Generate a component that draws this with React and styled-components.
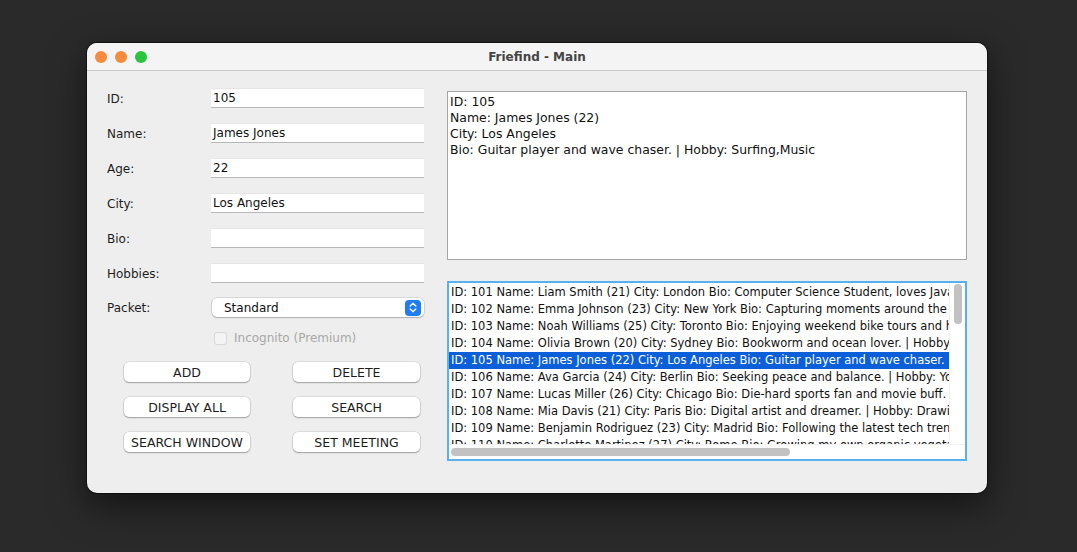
import React from 'react';
import styled, { createGlobalStyle } from 'styled-components';

const GlobalStyle = createGlobalStyle`
	html, body {
		margin: 0;
		padding: 0;
		background: #2a2a2a;
		width: 1077px;
		height: 552px;
		overflow: hidden;
	}
	body {
		font-family: "DejaVu Sans", "Liberation Sans", sans-serif;
		font-size: 12px;
		color: #1d1d1d;
	}
`;

const Desktop = styled.div`
	padding: 43px 0 0 87px;
`;

const Window = styled.div`
	width: 900px;
	height: 450px;
	border-radius: 10px;
	overflow: hidden;
	background: #eeeeee;
	display: flex;
	flex-direction: column;
	box-shadow: 0 0 0 1px rgba(0, 0, 0, 0.45), 0 12px 36px rgba(0, 0, 0, 0.55);
`;

const TitleBar = styled.div`
	height: 27px;
	flex: none;
	background: #f4f4f4;
	border-bottom: 1px solid #c9c9c9;
	display: flex;
	align-items: center;
	position: relative;
	h1 {
		flex: 1;
		margin: 0;
		text-align: center;
		font-size: 12px;
		font-weight: bold;
		color: #444;
	}
`;

const Lights = styled.div`
	position: absolute;
	left: 8px;
	top: 8px;
	display: flex;
	gap: 8px;
`;

const Light = styled.span`
	width: 12px;
	height: 12px;
	border-radius: 50%;
	background: ${(p) => p.color};
`;

const Content = styled.div`
	flex: 1;
	display: flex;
	padding: 17px 20px 0 20px;
	gap: 23px;
`;

const Form = styled.div`
	width: 317px;
	display: flex;
	flex-direction: column;
`;

const FieldRow = styled.div`
	display: grid;
	grid-template-columns: 104px 213px;
	align-items: center;
	height: 19px;
	margin-bottom: 16px;
	label {
		color: #1d1d1d;
		padding-top: 1px;
	}
`;

const TextField = styled.div`
	height: 18px;
	background: #fff;
	border-top: 1px solid #e6e6e6;
	border-bottom: 1px solid #b8b8b8;
	padding: 0 2px;
	line-height: 18px;
	color: #111;
`;

const Combo = styled.div`
	height: 19px;
	margin-left: 1px;
	background: #fff;
	border-radius: 5px;
	box-shadow: 0 0 0 0.5px rgba(0, 0, 0, 0.18), 0 1px 1.5px rgba(0, 0, 0, 0.2);
	display: flex;
	align-items: center;
	justify-content: space-between;
	padding: 0 3px 0 12px;
	color: #111;
`;

const Stepper = styled.span`
	width: 16px;
	height: 16px;
	border-radius: 4px;
	background: #1f7cf3;
	display: flex;
	align-items: center;
	justify-content: center;
`;

const CheckRow = styled.div`
	display: flex;
	align-items: center;
	gap: 7px;
	margin: -2px 0 0 107px;
	height: 14px;
	color: #a8a8a8;
`;

const CheckBox = styled.span`
	width: 11px;
	height: 11px;
	border-radius: 3px;
	border: 1px solid #d8d8d8;
	background: #f4f4f4;
`;

const ButtonGrid = styled.div`
	display: grid;
	grid-template-columns: 126px 127px;
	column-gap: 43px;
	row-gap: 15px;
	margin: 17px 0 0 17px;
`;

const Button = styled.button`
	height: 20px;
	border: none;
	border-radius: 5px;
	background: #fff;
	box-shadow: 0 0 0 0.5px rgba(0, 0, 0, 0.15), 0 1px 1.5px rgba(0, 0, 0, 0.28);
	font-family: inherit;
	font-size: 12.5px;
	color: #1d1d1d;
	padding: 0;
	white-space: nowrap;
`;

const Right = styled.div`
	width: 520px;
	display: flex;
	flex-direction: column;
	padding-top: 3px;
	gap: 21px;
`;

const Details = styled.div`
	height: 163px;
	background: #fff;
	border: 1px solid #a4a4a4;
	padding: 2px 2px;
	font-size: 12.45px;
	line-height: 16px;
	color: #111;
	white-space: pre;
	overflow: hidden;
`;

const List = styled.div`
	height: 176px;
	border: 2px solid #55b2ef;
	background: #fff;
	display: flex;
	flex-direction: column;
`;

const ListBody = styled.div`
	flex: 1;
	display: flex;
	min-height: 0;
`;

const Rows = styled.div`
	flex: 1;
	overflow: hidden;
	padding-top: 1px;
`;

const Row = styled.div`
	height: 17px;
	line-height: 17px;
	padding-left: 2px;
	font-size: 11.5px;
	white-space: nowrap;
	color: ${(p) => (p.selected ? '#fff' : '#111')};
	background: ${(p) => (p.selected ? '#0b5fd8' : 'transparent')};
`;

const VTrack = styled.div`
	width: 15px;
	flex: none;
	display: flex;
	justify-content: center;
	padding-top: 1px;
	border-left: 1px solid #f2f2f2;
`;

const VThumb = styled.div`
	width: 8px;
	height: 40px;
	border-radius: 4px;
	background: #c2c2c2;
`;

const HTrack = styled.div`
	height: 14px;
	flex: none;
	display: flex;
	align-items: center;
	padding-left: 2px;
	border-top: 1px solid #f2f2f2;
`;

const HThumb = styled.div`
	width: 339px;
	height: 8px;
	border-radius: 4px;
	background: #c2c2c2;
`;

const people = [
	'ID: 101 Name: Liam Smith (21) City: London Bio: Computer Science Student, loves Java | Hobby: Coding,Gaming',
	'ID: 102 Name: Emma Johnson (23) City: New York Bio: Capturing moments around the world. | Hobby: Photography,Travel',
	'ID: 103 Name: Noah Williams (25) City: Toronto Bio: Enjoying weekend bike tours and hiking. | Hobby: Cycling,Hiking',
	'ID: 104 Name: Olivia Brown (20) City: Sydney Bio: Bookworm and ocean lover. | Hobby: Reading,Swimming',
	'ID: 105 Name: James Jones (22) City: Los Angeles Bio: Guitar player and wave chaser. | Hobby: Surfing,Music',
	'ID: 106 Name: Ava Garcia (24) City: Berlin Bio: Seeking peace and balance. | Hobby: Yoga,Meditation',
	'ID: 107 Name: Lucas Miller (26) City: Chicago Bio: Die-hard sports fan and movie buff. | Hobby: Sports,Movies',
	'ID: 108 Name: Mia Davis (21) City: Paris Bio: Digital artist and dreamer. | Hobby: Drawing,Painting',
	'ID: 109 Name: Benjamin Rodriguez (23) City: Madrid Bio: Following the latest tech trends. | Hobby: Technology',
	'ID: 110 Name: Charlotte Martinez (27) City: Rome Bio: Growing my own organic vegetables. | Hobby: Gardening',
];

const fields = [
	['ID:', '105'],
	['Name:', 'James Jones'],
	['Age:', '22'],
	['City:', 'Los Angeles'],
	['Bio:', ''],
	['Hobbies:', ''],
];

const buttons = ['ADD', 'DELETE', 'DISPLAY ALL', 'SEARCH', 'SEARCH WINDOW', 'SET MEETING'];

export default function App() {
	return (
		<Desktop>
			<GlobalStyle />
			<Window>
				<TitleBar>
					<Lights>
						<Light color="#f68b3e" />
						<Light color="#f68b3e" />
						<Light color="#2bc43f" />
					</Lights>
					<h1>Friefind - Main</h1>
				</TitleBar>
				<Content>
					<Form>
						{fields.map(([label, value]) => (
							<FieldRow key={label}>
								<label>{label}</label>
								<TextField>{value}</TextField>
							</FieldRow>
						))}
						<FieldRow>
							<label>Packet:</label>
							<Combo>
								<span>Standard</span>
								<Stepper>
									<svg width="8" height="11" viewBox="0 0 8 11" fill="none" stroke="#fff" strokeWidth="1.4" strokeLinecap="round" strokeLinejoin="round">
										<path d="M1.2 4 L4 1.3 L6.8 4" />
										<path d="M1.2 7 L4 9.7 L6.8 7" />
									</svg>
								</Stepper>
							</Combo>
						</FieldRow>
						<CheckRow>
							<CheckBox />
							<span>Incognito (Premium)</span>
						</CheckRow>
						<ButtonGrid>
							{buttons.map((b) => (
								<Button key={b}>{b}</Button>
							))}
						</ButtonGrid>
					</Form>
					<Right>
						<Details>
							{'ID: 105\nName: James Jones (22)\nCity: Los Angeles\nBio: Guitar player and wave chaser. | Hobby: Surfing,Music'}
						</Details>
						<List>
							<ListBody>
								<Rows>
									{people.map((p) => (
										<Row key={p} selected={p.startsWith('ID: 105')}>
											{p}
										</Row>
									))}
								</Rows>
								<VTrack>
									<VThumb />
								</VTrack>
							</ListBody>
							<HTrack>
								<HThumb />
							</HTrack>
						</List>
					</Right>
				</Content>
			</Window>
		</Desktop>
	);
}
